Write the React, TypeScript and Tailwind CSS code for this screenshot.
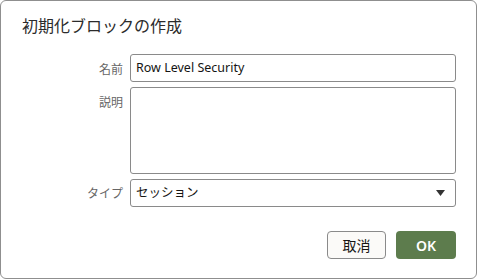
import React from "react";

const font = { fontFamily: '"Noto Sans", "Noto Sans CJK JP", sans-serif' };

export default function App() {
  return (
    <div
      className="w-[477px] h-[279px] bg-white border border-[#8f8f8f] rounded-[6px] flex flex-col text-[#161513]"
      style={font}
    >
      <div className="pl-[21px] pt-[14px] h-[53px] text-[16px] leading-[22px] text-[#2b2b2b]">
        初期化ブロックの作成
      </div>
      <div className="grid grid-cols-[122px_1fr] gap-x-[7px] gap-y-[5px] pl-0 pr-[20px]">
        <div className="text-right text-[12px] leading-[16px] pt-[8px] text-[#666]">名前</div>
        <div className="h-[28px] border border-[#8a8a8a] rounded-[3px] flex items-center px-[5px] text-[12.5px]">
          Row Level Security
        </div>
        <div className="text-right text-[12px] leading-[16px] pt-[8px] text-[#666]">説明</div>
        <div className="h-[87px] border border-[#8a8a8a] rounded-[3px]"></div>
        <div className="text-right text-[12px] leading-[16px] pt-[7px] text-[#666]">タイプ</div>
        <div className="h-[28px] border border-[#8a8a8a] rounded-[3px] flex items-center justify-between pl-[5px] pr-[10px] text-[12.5px]">
          <span>セッション</span>
          <svg width="9" height="6" viewBox="0 0 9 6">
            <polygon points="0,0 9,0 4.5,6" fill="#333" />
          </svg>
        </div>
      </div>
      <div className="flex justify-end gap-[10px] pr-[20px] mt-[24px]">
        <button className="w-[59px] h-[28px] rounded-[4px] border border-[#8a8a8a] bg-[#fbfaf8] text-[14px] text-[#161513]">
          取消
        </button>
        <button className="w-[60px] h-[28px] rounded-[4px] bg-[#5d7c4d] text-[14px] font-semibold text-white">
          OK
        </button>
      </div>
    </div>
  );
}
